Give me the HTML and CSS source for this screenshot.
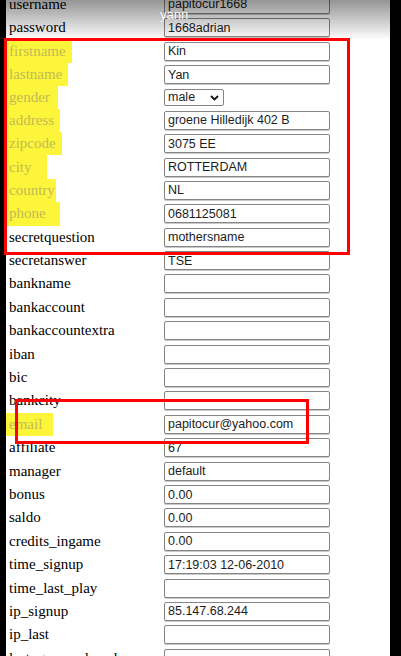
FILE: index.html
```html
<!DOCTYPE html>
<html>
<head>
<meta charset="utf-8">
<link rel="stylesheet" href="styles.css">
</head>
<body>
<div class="screen">
  <div class="edge edge-left"></div>
  <div class="content">
    <div class="form">
      <div class="row"><span class="lbl">username</span><input class="fld" value="papitocur1668"></div>
      <div class="row"><span class="lbl">password</span><input class="fld" value="1668adrian"></div>
      <div class="row"><span class="lbl hl hl-firstname">firstname</span><input class="fld" value="Kin"></div>
      <div class="row"><span class="lbl hl hl-lastname">lastname</span><input class="fld" value="Yan"></div>
      <div class="row row-short"><span class="lbl hl hl-gender">gender</span>
        <span class="sel-wrap">
          <select class="sel"><option>male</option><option>female</option></select>
          <svg class="chev" width="9" height="6" viewBox="0 0 9 6"><path d="M1 1 L4.5 4.5 L8 1" fill="none" stroke="#111" stroke-width="1.8"/></svg>
        </span>
      </div>
      <div class="row"><span class="lbl hl hl-address">address</span><input class="fld" value="groene Hilledijk 402 B"></div>
      <div class="row"><span class="lbl hl hl-zipcode">zipcode</span><input class="fld" value="3075 EE"></div>
      <div class="row"><span class="lbl hl hl-city">city</span><input class="fld" value="ROTTERDAM"></div>
      <div class="row"><span class="lbl hl hl-country">country</span><input class="fld" value="NL"></div>
      <div class="row"><span class="lbl hl hl-phone">phone</span><input class="fld" value="0681125081"></div>
      <div class="row"><span class="lbl">secretquestion</span><input class="fld" value="mothersname"></div>
      <div class="row"><span class="lbl">secretanswer</span><input class="fld" value="TSE"></div>
      <div class="row"><span class="lbl">bankname</span><input class="fld" value=""></div>
      <div class="row"><span class="lbl">bankaccount</span><input class="fld" value=""></div>
      <div class="row"><span class="lbl">bankaccountextra</span><input class="fld" value=""></div>
      <div class="row"><span class="lbl">iban</span><input class="fld" value=""></div>
      <div class="row"><span class="lbl">bic</span><input class="fld" value=""></div>
      <div class="row"><span class="lbl">bankcity</span><input class="fld" value=""></div>
      <div class="row"><span class="lbl hl hl-email">email</span><input class="fld" value="papitocur@yahoo.com"></div>
      <div class="row"><span class="lbl">affiliate</span><input class="fld" value="67"></div>
      <div class="row"><span class="lbl">manager</span><input class="fld" value="default"></div>
      <div class="row"><span class="lbl">bonus</span><input class="fld" value="0.00"></div>
      <div class="row"><span class="lbl">saldo</span><input class="fld" value="0.00"></div>
      <div class="row"><span class="lbl">credits_ingame</span><input class="fld" value="0.00"></div>
      <div class="row"><span class="lbl">time_signup</span><input class="fld" value="17:19:03 12-06-2010"></div>
      <div class="row"><span class="lbl">time_last_play</span><input class="fld" value=""></div>
      <div class="row"><span class="lbl">ip_signup</span><input class="fld" value="85.147.68.244"></div>
      <div class="row"><span class="lbl">ip_last</span><input class="fld" value=""></div>
      <div class="row"><span class="lbl">last_game_played</span><input class="fld" value=""></div>
    </div>
  </div>
  <div class="edge edge-right"></div>
  <div class="shade"></div>
  <div class="caption">yann</div>
  <div class="mark mark-1"></div>
  <div class="mark mark-2"></div>
</div>
</body>
</html>
```
FILE: styles.css
```css
html, body {
  margin: 0;
  padding: 0;
  background: #fff;
}

.screen {
  position: relative;
  width: 401px;
  height: 656px;
  overflow: hidden;
  display: flex;
  background: #fff;
}

.edge {
  flex: none;
  background: #000;
}

.edge-left { width: 6px; }
.edge-right { width: 11px; }

.content {
  flex: 1;
  min-width: 0;
}

.form {
  margin-top: -7.3px;
  display: flex;
  flex-direction: column;
}

.row {
  display: grid;
  grid-template-columns: 158px 166px;
  height: 23.4px;
  align-items: center;
}

.row-short {
  height: 22.3px;
}

.lbl {
  justify-self: start;
  align-self: stretch;
  display: flex;
  align-items: center;
  padding-left: 3px;
  font-family: "Liberation Serif", "Times New Roman", serif;
  font-size: 15px;
  color: #000;
  white-space: nowrap;
  box-sizing: border-box;
}

.hl {
  background: #fdf539;
  color: #c2ba58;
}

.hl-firstname { width: 66px; }
.hl-lastname { width: 62px; }
.hl-gender { width: 52px; }
.hl-address { width: 54px; }
.hl-zipcode { width: 56px; }
.hl-city { width: 41px; }
.hl-country { width: 50px; }
.hl-phone { width: 54px; }
.hl-email { width: 47px; }

.fld {
  box-sizing: border-box;
  width: 166px;
  height: 19px;
  margin: 0;
  padding: 0 2px 0 3px;
  border: 1px solid #858585;
  border-radius: 2px;
  box-shadow: 0 1px 0 #c9c9c9;
  background: #fff;
  font-family: "Liberation Sans", Arial, sans-serif;
  font-size: 12.5px;
  color: #1c1c1c;
  outline: none;
}

.sel-wrap {
  position: relative;
  display: block;
  width: 60px;
  height: 17.7px;
}

.sel {
  -webkit-appearance: none;
  appearance: none;
  box-sizing: border-box;
  display: block;
  width: 60px;
  height: 17.7px;
  margin: 0;
  padding: 0 0 0 3px;
  border: 1px solid #858585;
  border-radius: 2px;
  background: #fff;
  font-family: "Liberation Sans", Arial, sans-serif;
  font-size: 12.5px;
  color: #1c1c1c;
}

.chev {
  position: absolute;
  left: 46px;
  top: 6px;
  pointer-events: none;
}

.shade {
  position: absolute;
  left: 0;
  top: 0;
  width: 390px;
  height: 40px;
  background: linear-gradient(to bottom, rgba(0,0,0,0.42), rgba(0,0,0,0));
  pointer-events: none;
}

.caption {
  position: absolute;
  left: 160px;
  top: 7px;
  font-family: "Liberation Sans", Arial, sans-serif;
  font-size: 13px;
  color: #fff;
  text-shadow: 0 0 1px rgba(0,0,0,0.25);
}

.mark {
  position: absolute;
  box-sizing: border-box;
  border: 3px solid #ff0000;
}

.mark-1 {
  left: 4px;
  top: 38px;
  width: 346px;
  height: 217px;
}

.mark-2 {
  left: 15px;
  top: 399px;
  width: 294px;
  height: 45px;
}
```
